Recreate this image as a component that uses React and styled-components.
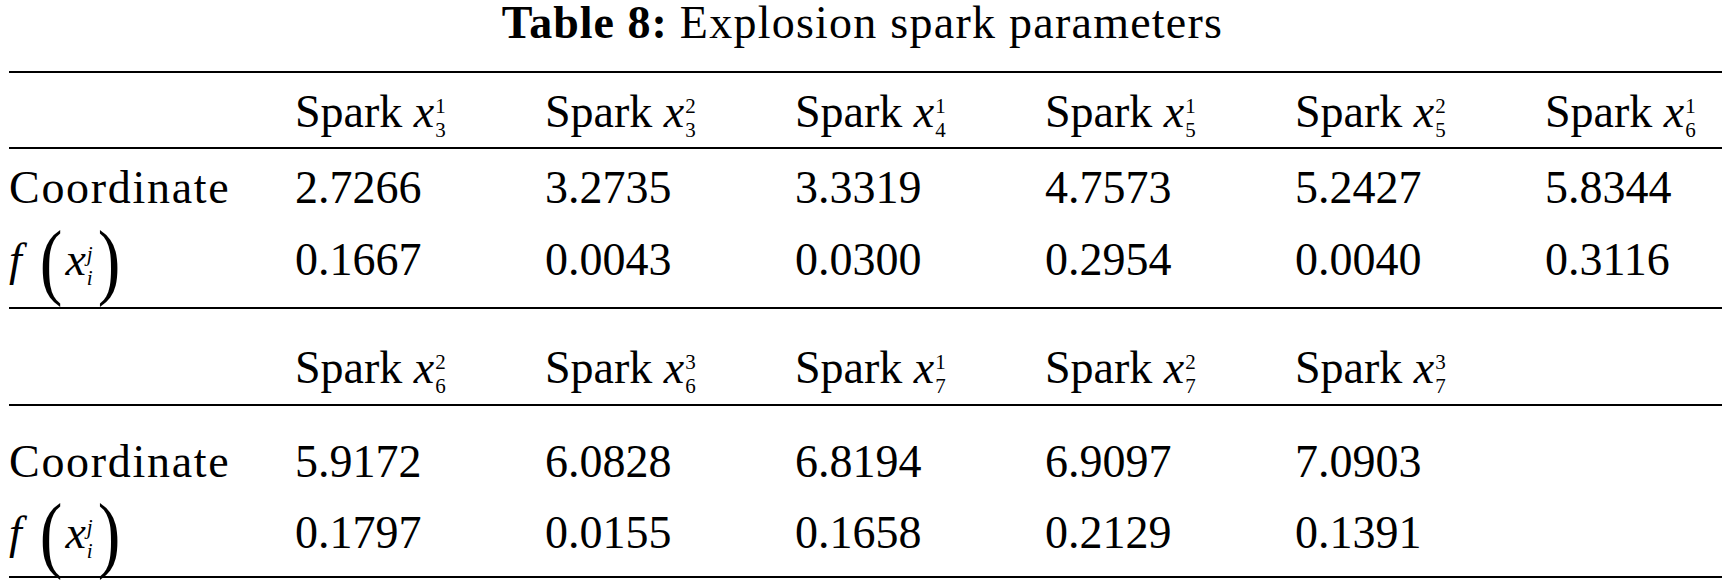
import styled, { createGlobalStyle } from 'styled-components';

const GlobalStyle = createGlobalStyle`
  html, body {
    margin: 0;
    padding: 0;
    background: #fff;
  }
  body {
    font-family: "Liberation Serif", "Times New Roman", serif;
    color: #000;
  }
`

const Page = styled.div`
  width: 1725px;
  height: 583px;
  padding: 0 3px 0 9px;
  box-sizing: border-box;
  font-size: 46px;
  line-height: 46px;
`

const Caption = styled.div`
  height: 71px;
  padding-top: 3px;
  margin: 0 -3px 0 -9px;
  box-sizing: border-box;
  text-align: center;
  line-height: 40px;
  white-space: nowrap;
`

const CaptionLabel = styled.b`
  letter-spacing: 1px;
  margin-right: 12px;
`

const CaptionText = styled.span`
  letter-spacing: 1.25px;
`

const Block = styled.div`
  border-top: 2px solid #000;
  border-bottom: ${props => props.$last ? '2px solid #000' : 'none'};
`

const Row = styled.div`
  display: grid;
  grid-template-columns: 286px repeat(5, 250px) 1fr;
  height: ${props => props.$h}px;
  padding-top: ${props => props.$pt}px;
  box-sizing: border-box;
  border-bottom: ${props => props.$rule ? '2px solid #000' : 'none'};
`

const Cell = styled.div`
  white-space: nowrap;
`

const RowLabel = styled.span`
  letter-spacing: 1.7px;
`

const Italic = styled.i`
  font-style: italic;
`

const Scripts = styled.span`
  display: inline-flex;
  flex-direction: column;
  vertical-align: 14px;
  margin-left: 1px;
  font-size: 21px;
  line-height: 24px;
  font-style: ${props => props.$italic ? 'italic' : 'normal'};
`

const Paren = styled.span`
  display: inline-block;
  font-size: 68px;
  line-height: 0;
  transform-origin: 50% 0;
  transform: translateY(8px) scaleY(1.25);
  margin-left: ${props => props.$left}px;
  margin-right: ${props => props.$right}px;
`

const Var = ({ sub, sup, italic }) => (
  <>
    <Italic>x</Italic>
    <Scripts $italic={italic}>
      <span>{sup}</span>
      <span>{sub}</span>
    </Scripts>
  </>
)

const FLabel = () => (
  <>
    <Italic>f</Italic>
    <Paren $left={18} $right={3}>(</Paren>
    <Var sup="j" sub="i" italic />
    <Paren $left={5} $right={0}>)</Paren>
  </>
)

const blocks = [
  {
    sparks: [[3, 1], [3, 2], [4, 1], [5, 1], [5, 2], [6, 1]],
    coords: ['2.7266', '3.2735', '3.3319', '4.7573', '5.2427', '5.8344'],
    values: ['0.1667', '0.0043', '0.0300', '0.2954', '0.0040', '0.3116'],
    rows: { head: [76, 15.5], coord: [72, 15.5], f: [86, 15.5] },
  },
  {
    sparks: [[6, 2], [6, 3], [7, 1], [7, 2], [7, 3]],
    coords: ['5.9172', '6.0828', '6.8194', '6.9097', '7.0903'],
    values: ['0.1797', '0.0155', '0.1658', '0.2129', '0.1391'],
    rows: { head: [97, 35.5], coord: [71, 32.5], f: [99, 32.5] },
  },
]

const App = () => {
  return (
    <Page>
      <GlobalStyle />
      <Caption>
        <CaptionLabel>Table 8:</CaptionLabel>
        <CaptionText>Explosion spark parameters</CaptionText>
      </Caption>

      {blocks.map((block, i) => (
        <Block key={i} $last={i === blocks.length - 1}>
          <Row $h={block.rows.head[0]} $pt={block.rows.head[1]} $rule>
            <Cell />
            {block.sparks.map(([sub, sup]) => (
              <Cell key={`${sub}-${sup}`}>
                Spark <Var sub={sub} sup={sup} />
              </Cell>
            ))}
          </Row>
          <Row $h={block.rows.coord[0]} $pt={block.rows.coord[1]}>
            <Cell><RowLabel>Coordinate</RowLabel></Cell>
            {block.coords.map(c => <Cell key={c}>{c}</Cell>)}
          </Row>
          <Row $h={block.rows.f[0]} $pt={block.rows.f[1]}>
            <Cell><FLabel /></Cell>
            {block.values.map(v => <Cell key={v}>{v}</Cell>)}
          </Row>
        </Block>
      ))}
    </Page>
  )
}

export default App;
